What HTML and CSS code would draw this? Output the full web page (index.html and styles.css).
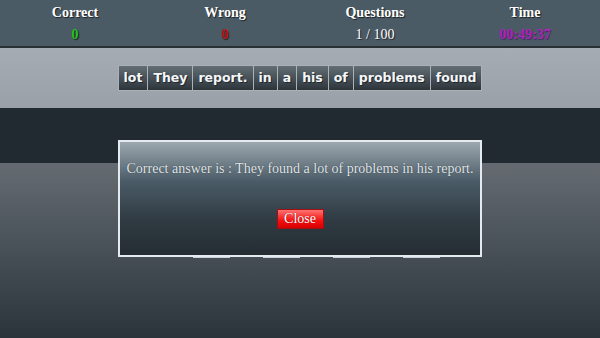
FILE: index.html
```html
<!DOCTYPE html>
<html lang="en">

<head>
    <meta charset="UTF-8">
    <meta name="viewport" content="width=device-width, initial-scale=1.0">
    <title>Sentence Builder</title>
    <link rel="stylesheet" href="styles.css">
</head>

<body>
    <div class="scoreboard">
        <div class="score">
            <h3>Correct</h3>
            <span class="value correct">0</span>
        </div>
        <div class="score">
            <h3>Wrong</h3>
            <span class="value wrong">0</span>
        </div>
        <div class="score">
            <h3>Questions</h3>
            <span class="value">1 / 100</span>
        </div>
        <div class="score">
            <h3>Time</h3>
            <span class="value time">00:49:37</span>
        </div>
    </div>

    <div class="words-band">
        <ul class="words">
            <li>lot</li>
            <li>They</li>
            <li>report.</li>
            <li>in</li>
            <li>a</li>
            <li>his</li>
            <li>of</li>
            <li>problems</li>
            <li>found</li>
        </ul>
    </div>

    <div class="answer-band"></div>

    <div class="play-area">
        <div class="slots">
            <div class="slot"></div>
            <div class="slot"></div>
            <div class="slot"></div>
            <div class="slot"></div>
        </div>
    </div>

    <div class="modal">
        <p>Correct answer is : They found a lot of problems in his report.</p>
        <button class="close-btn">Close</button>
    </div>
</body>

</html>
```

FILE: styles.css
```css
* {
    padding: 0;
    margin: 0;
    box-sizing: border-box;
}

body {
    width: 600px;
    height: 338px;
    overflow: hidden;
    font-family: "Liberation Serif", "Times New Roman", serif;
    background: #2b343a;
    position: relative;
}

.scoreboard {
    display: grid;
    grid-template-columns: repeat(4, 1fr);
    height: 48px;
    background: #4b5b66;
    border-bottom: 2px solid #283036;
}

.score {
    text-align: center;
    color: #ffffff;
    text-shadow: 1px 1px 1px #1a2025;
}

.score h3 {
    font-size: 14px;
    font-weight: bold;
    line-height: 16px;
    margin-top: 5px;
}

.value {
    display: block;
    font-size: 14px;
    line-height: 16px;
    margin-top: 6px;
}

.value.correct {
    color: #1fc41f;
    font-weight: bold;
}

.value.wrong {
    color: #c41212;
    font-weight: bold;
}

.value.time {
    color: #b023b8;
    font-weight: bold;
    text-shadow: 1px 1px 1px #3a2a60;
}

.words-band {
    height: 60px;
    background: linear-gradient(#a6acb3, #9aa0a7);
    display: flex;
    justify-content: center;
    padding-top: 17px;
}

.words {
    list-style: none;
    display: flex;
    gap: 1px;
    height: 26px;
    padding: 1px;
    background: #aab2b8;
    align-self: flex-start;
}

.words li {
    font-family: "DejaVu Sans", Verdana, sans-serif;
    font-size: 12.5px;
    font-weight: bold;
    color: #f4f6f7;
    line-height: 24px;
    padding: 0 5px;
    background: linear-gradient(#626d74, #2d353b);
    text-shadow: 1px 1px 0 #20272c;
}

.answer-band {
    height: 55px;
    background: #222a31;
}

.play-area {
    height: 175px;
    background: linear-gradient(#656b71, #4a535a 45%, #2b343a);
    padding-top: 94px;
}

.slots {
    display: flex;
    justify-content: center;
    gap: 33px;
    margin-left: 33px;
}

.slot {
    width: 37px;
    height: 2px;
    border-top: 1px solid #c8d2d8;
}

.modal {
    position: absolute;
    left: 118px;
    top: 140px;
    width: 364px;
    height: 117px;
    border: 2px solid #e4eaee;
    background: linear-gradient(#9ca7ae, #4a5b67 35%, #2f3a42 70%, #252d33);
    text-align: center;
}

.modal p {
    color: #e2e8ec;
    font-size: 14px;
    line-height: 16px;
    margin-top: 19px;
    text-shadow: 0 0 1px #1e262c;
}

.close-btn {
    margin-top: 32px;
    width: 47px;
    height: 20px;
    border: 1px solid #a01010;
    background: linear-gradient(#ff7272, #f41010 60%, #d80000);
    color: #ffffff;
    font-family: "Liberation Serif", "Times New Roman", serif;
    font-size: 14px;
    line-height: 16px;
    text-shadow: 0 0 1px #8a0000;
}
```
